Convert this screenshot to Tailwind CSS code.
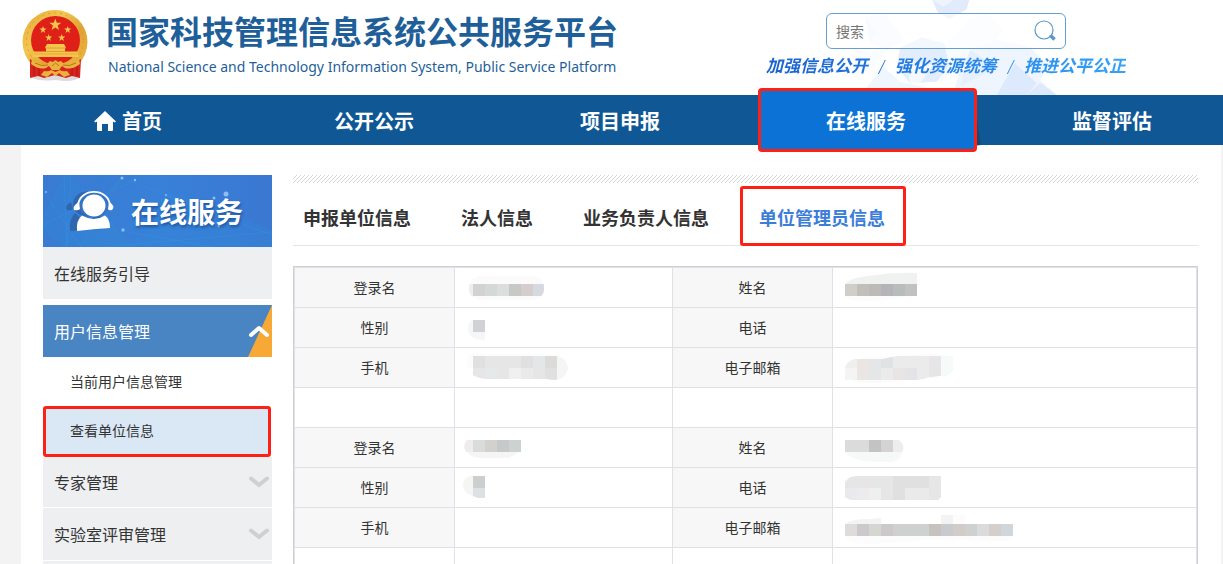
<!DOCTYPE html>
<html lang="zh-CN">
<head>
<meta charset="utf-8">
<title>国家科技管理信息系统公共服务平台</title>
<script src="https://cdn.jsdelivr.net/npm/@tailwindcss/browser@4"></script>
</head>
<body class="h-screen overflow-hidden bg-[#f3f3f3] font-['Noto_Sans_CJK_SC',sans-serif] text-[#333]">
<header class="relative flex h-[95px] bg-white pl-[22px] pr-[97px]">
  <!-- faint polygon backdrop -->
  <svg class="absolute right-0 top-0 h-[95px] w-[483px]" viewBox="0 0 1449 285" aria-hidden="true">
    <path d="M577 0H688L680 28L628 58L592 35Z" fill="#e1ebfc"/><path d="M577 0H640L610 20Z" fill="#eef4fd"/>
    <path d="M375 50L435 42L495 120L440 150L390 130Z" fill="#f3f8fe"/><path d="M375 50L410 95L390 130Z" fill="#ecf3fe"/>
    <path d="M685 60L740 40L790 90L750 150L680 170L600 250L560 170L620 130Z" fill="#f7faff"/>
    <path d="M480 145L545 112L612 130L628 195L590 245L510 250L470 200Z" fill="#e2edfd"/><path d="M500 180L580 195L540 250L510 250Z" fill="#f5f9ff"/>
    <path d="M380 262L430 200L480 245L560 262L500 285H370Z" fill="#f0f6fe"/>
    <path d="M690 150L770 120L870 140L925 200L900 240L950 285H770L640 285L660 210Z" fill="#eff5fe"/>
    <path d="M770 285L825 190L890 250L860 285Z" fill="#dde9fc"/><path d="M860 285L900 248L950 285Z" fill="#deeafc"/><path d="M690 150L770 200L660 260Z" fill="#e6f0fd"/>
    <path d="M340 130L390 160L440 150L400 200L350 230Z" fill="#fafcff"/>
  </svg>
  <svg class="mt-[9px] h-[73px] w-[67px] shrink-0" viewBox="0 0 67 73" role="img" aria-label="国徽">
    <defs><linearGradient id="gold" x1="0" y1="0" x2="1" y2="1"><stop offset="0" stop-color="#e3a936"/><stop offset=".35" stop-color="#f3c650"/><stop offset=".6" stop-color="#e0a233"/><stop offset="1" stop-color="#efbd46"/></linearGradient></defs>
    <path d="M9 68Q16 73 33 71Q52 74 58 68L57 65H10Z" fill="#dcdcdc"/>
    <ellipse cx="33" cy="33" rx="32.500" ry="32" fill="url(#gold)"/>
    <ellipse cx="33" cy="32" rx="28.500" ry="28" fill="none" stroke="#d89d31" stroke-width="1" stroke-dasharray="2 4"/>
    <path d="M8 50L20 57H47L59 50L58 69L50 67L44 69L33 66L22 69L16 67L8 69Z" fill="#d8241c"/>
    <path d="M12 55V67M17 57V67M50 57V67M55 55V67" stroke="#aa1818"/>
    <ellipse cx="33.500" cy="31" rx="24.500" ry="24" fill="#df2019"/>
    <g fill="#f5c64b">
      <path d="M33.300 9.500l1.500 4.300h4.500l-3.600 2.800 1.300 4.400-3.700-2.600-3.700 2.600 1.300-4.400-3.600-2.800h4.500z"/>
      <path d="M21 17l.9 2.600h2.700l-2.200 1.600.8 2.700-2.200-1.600-2.200 1.600.8-2.700-2.200-1.600h2.700zM45.700 17l.9 2.600h2.700l-2.200 1.600.8 2.700-2.200-1.600-2.200 1.600.8-2.700-2.200-1.600h2.700zM26.700 25l.9 2.600h2.700l-2.200 1.600.8 2.700-2.200-1.600-2.200 1.600.8-2.700-2.200-1.600h2.700zM39.700 25l.9 2.600h2.700l-2.200 1.600.8 2.700-2.200-1.600-2.200 1.600.8-2.700-2.200-1.600h2.700z"/>
      <path d="M25 35h17l2 3.500-1 .5v3.500h12l2 5.500H10l2-5.500h12V39l-1-.5z"/>
    </g>
    <path d="M23 39h21M24 42.500h19" stroke="#d59a30" stroke-width=".8"/>
    <path d="M12 45h43" stroke="#dda538" stroke-width=".7"/>
    <path d="M17 49h33q-7 6-16.500 6T17 49z" fill="#df2019"/>
    <path d="M10 50Q18 57 25 55l3-3 3 1 2.500-2 2.500 2 3-1 3 3Q49 57 57 50L58 55Q50 61 43 59l-3-2-3 4h-7l-3-4-3 2Q17 61 9 55Z" fill="#eab33d"/>
    <path d="M13 54Q20 58 26 56M54 54Q47 58 41 56M30 57l3.500-3 3.500 3" fill="none" stroke="#b9741c"/>
    <path d="M22 62q5 1 7-1l4.500 2 4.500-2q2 2 7 1l3 4-6 2-5-4-3.500 3-3.500-3-5 4-6-2z" fill="#eab33d"/>
  </svg>
  <div class="ml-[17px] whitespace-nowrap text-[#1f5f99]">
    <h1 class="mt-[6px] text-[32px] font-bold leading-[48px]">国家科技管理信息系统公共服务平台</h1>
    <p class="pl-[2px] font-['Noto_Sans',sans-serif] text-[14px] leading-[26px]">National Science and Technology Information System, Public Service Platform</p>
  </div>
  <div class="relative ml-auto w-[360px] shrink-0">
    <form class="ml-[60px] mt-[13px] flex h-9 w-60 items-center rounded-md border border-[#659fd0] bg-white/60 pl-[9px] pr-2" onsubmit="return false">
      <input type="search" aria-label="搜索" placeholder="搜索" class="min-w-0 flex-1 bg-transparent text-sm outline-none placeholder:text-[#757575]">
      <button type="submit" aria-label="提交搜索"><svg class="size-6" viewBox="0 0 24 24" fill="none" stroke="#5b97cb"><circle cx="11" cy="11" r="9" stroke-width="1.200"/><path d="M16.500 16.500L18 18" stroke-width="1.500"/><path d="M18 17L21.500 20.500" stroke-width="3.500"/></svg></button>
    </form>
    <p class="mt-1 flex items-center justify-between whitespace-nowrap bg-linear-to-r from-[#1b62cf] to-[#35a2f8] bg-clip-text font-['Liberation_Serif','Noto_Sans_CJK_SC',serif] text-[17px] font-bold italic leading-6 text-transparent"><span>加强信息公开</span><span class="text-xl font-normal">/</span><span>强化资源统筹</span><span class="text-xl font-normal">/</span><span>推进公平公正</span></p>
  </div>
</header>

<nav class="relative flex h-[50px] bg-[#0f5895] pl-[5px] text-xl font-bold text-white" aria-label="主导航">
  <div class="-mr-3 flex flex-1 pt-px">
    <a href="#" class="flex flex-1 items-center justify-center gap-[6px]"><svg class="h-5 w-[22px]" viewBox="0 0 22 20" fill="#fff" aria-hidden="true"><path d="M11 0L22 10.500L20.500 11.500L19 10.500V19Q19 20 18 20H14V13H8V20H4Q3 20 3 19V10.500L1.500 11.500L0 10.500Z"/></svg>首页</a>
    <a href="#" class="flex flex-1 items-center justify-center">公开公示</a>
    <a href="#" class="flex flex-1 items-center justify-center">项目申报</a>
    <a href="#" aria-current="page" class="relative flex flex-1 items-center justify-center">
      <svg class="absolute -bottom-px right-2 h-[50px] w-2" viewBox="0 0 8 50" aria-hidden="true"><path d="M0 0L8 49L0 50Z" fill="#144a78"/></svg>
      <span class="absolute -bottom-[7px] -top-2 left-[15px] right-3 rounded-[4px] border-3 border-[#ff2015] bg-[#0c72d6]"></span>
      <span class="relative">在线服务</span></a>
    <a href="#" class="flex flex-1 items-center justify-center">监督评估</a>
  </div>
</nav>

<main class="ml-[21px] mr-[2px] flex h-[calc(100vh-145px)] gap-[21px] overflow-hidden bg-white pl-[22px] pr-[23px] pt-[30px]">
  <aside class="w-[229px] shrink-0 text-base">
    <div class="relative h-[72px] bg-linear-to-r from-[#397bd2] via-[#3880d8] to-[#3b78d2]">
      <svg class="absolute inset-0 size-full" viewBox="0 0 229 72" aria-hidden="true">
        <path d="M0 40L21 0L28 0L90 72H20L0 55ZM100 60L125 15L229 55V72H60Z" fill="#2f8bdc" opacity=".3"/>
        <path d="M0 15L38 72L80 0M20 72L78 3L229 60M60 72L229 57M21 0L24 72M28 0L24 72M125 20L80 56L170 72M0 50L92 5" fill="none" stroke="#38a0e4" stroke-width=".5" opacity=".5"/>
        <g fill="#8bbdf0"><circle cx="79" cy="3" r="1.500"/><circle cx="92" cy="5" r="1.200"/><circle cx="123" cy="20" r="1"/><circle cx="171" cy="23" r="1.500"/><circle cx="183" cy="19" r="2.500"/><circle cx="80" cy="55" r="1.700"/><circle cx="176" cy="51" r="1.500"/><circle cx="3" cy="17" r="1"/></g>
        <g fill="#2f66ae" transform="translate(-7 0)"><ellipse cx="51" cy="29" rx="14" ry="12.500"/><path d="M35 27Q28 31 31 35Q35 36 37 34ZM39 38Q51 50 63 39Q68 44 67 54L34 56Q33 44 39 38Z"/></g>
        <ellipse cx="51" cy="29.500" rx="15" ry="13" fill="#3474c4"/>
        <ellipse cx="51" cy="30.500" rx="11.500" ry="11" fill="#fff"/>
        <path d="M35 30C37 12.500 65 12.500 67 30" fill="none" stroke="#fff" stroke-width="1.800"/>
        <path d="M36 27Q29 31 31 35Q35 36 37 34ZM66 27Q73 31 69 35Q66 36 65 34ZM39 40.500Q51 47.500 62 40.500Q67 44 67 53Q51 54 34 56Q33 45 39 40.500Z" fill="#fff"/>
      </svg>
      <h2 class="relative pl-[88px] text-[28px] font-bold leading-[72px] text-white text-shadow-[1px_2px_3px_#1d559f]">在线服务</h2>
    </div>
    <a href="#" class="flex h-[52px] items-center bg-[#eeeff1] pl-[11px]">在线服务引导</a>
    <a href="#" class="relative mt-[6px] flex h-[52px] items-center bg-[#4885c2] pl-[11px] text-white">用户信息管理
      <svg class="absolute right-0 top-0 h-[52px] w-6" viewBox="0 0 24 52" fill="none" aria-hidden="true"><path d="M24 0V52H0Z" fill="#f8a835"/><path d="M3 30L11 23L19 30" stroke="#fff" stroke-width="4" stroke-linecap="round" stroke-linejoin="round"/></svg></a>
    <a href="#" class="flex h-[49px] items-center pb-[2px] pl-[27px] text-sm">当前用户信息管理</a>
    <a href="#" aria-current="page" class="mr-px flex h-[51px] items-center rounded-[3px] border-3 border-[#ff2015] bg-[#dae7f4] pb-[3px] pl-6 text-sm">查看单位信息</a>
    <a href="#" class="mb-px flex h-[50px] items-center justify-between bg-[#eeeff1] pl-[11px] pr-[3px]">专家管理
      <svg class="h-3 w-5" viewBox="0 0 20 12" fill="none" aria-hidden="true"><path d="M2 2.500L10 9L18 2.500" stroke="#d0d0d0" stroke-width="4" stroke-linecap="round"/></svg></a>
    <a href="#" class="mb-px flex h-[52px] items-center justify-between bg-[#eeeff1] pl-[11px] pr-[3px]">实验室评审管理
      <svg class="h-3 w-5" viewBox="0 0 20 12" fill="none" aria-hidden="true"><path d="M2 2.500L10 9L18 2.500" stroke="#d0d0d0" stroke-width="4" stroke-linecap="round"/></svg></a>
    <div class="h-[52px] bg-[#eeeff1]"></div>
  </aside>

  <section class="min-w-0 flex-1">
    <svg class="block h-2 w-full" aria-hidden="true"><defs><pattern id="hatch" width="4" height="4" patternUnits="userSpaceOnUse"><path d="M-1 5L5 -1M-1 1L1 -1M3 5L5 3" stroke="#d8d8d8"/></pattern></defs><rect width="100%" height="8" fill="url(#hatch)"/></svg>
    <div class="flex h-[63px] items-center gap-[50px] whitespace-nowrap border-b border-[#e5e5e8] pb-px pl-[10px] pt-[6px] text-lg font-bold">
      <a href="#">申报单位信息</a>
      <a href="#">法人信息</a>
      <a href="#">业务负责人信息</a>
      <a href="#" aria-current="page" class="relative text-[#3b7dd8]">单位管理员信息<span class="absolute -bottom-[15px] -left-[19px] -right-[21px] -top-[17px] rounded-[3px] border-3 border-[#ff2015]"></span></a>
    </div>
    <div class="mt-5 border border-[#cfcfd6]">
    <table class="w-full table-fixed border-collapse text-sm [&_td]:border [&_td]:border-[#e0e0e6] [&_td]:p-0 [&_th]:border [&_th]:border-[#e0e0e6] [&_th]:bg-[#f7f7f7] [&_th]:p-0 [&_th]:pb-[2px] [&_th]:font-normal [&_tr]:h-10 [&_svg]:block [&_svg]:h-[38px] [&_svg]:w-[200px]">
      <colgroup><col class="w-[160px]"><col class="w-[218px]"><col class="w-[160px]"><col></colgroup>
      <tbody>
      <tr><th scope="row">登录名</th><td><svg viewBox="0 1 200 38" shape-rendering="crispEdges"><clipPath id="a1"><rect x="14" y="8" width="75" height="24" rx="11"/></clipPath><g clip-path="url(#a1)"><path d="M14 8h75v24H14z" fill="#fbfbfb"/><path d="M14 16h4v12h-4z" fill="#eee"/><path d="M18 16h12v12H18z" fill="#d2d2d2"/><path d="M30 16h12v12H30z" fill="#d4d8d9"/><path d="M42 16h12v12H42z" fill="#dcdddd"/><path d="M54 16h12v12H54z" fill="#c8c8c6"/><path d="M66 16h12v12H66z" fill="#d6cece"/><path d="M78 16h12v12H78z" fill="#d6dae0"/></g></svg></td>
        <th scope="row">姓名</th><td><svg viewBox="0 1 200 38"><path d="M12 16Q18 9 36 8Q60 4 84 5V16Z" fill="#f0f1f1"/><path d="M12 28Q16 34 40 33L84 28Z" fill="#fcfcfc"/><g shape-rendering="crispEdges"><path d="M12 16h12v12H12z" fill="#cfcec8"/><path d="M24 16h12v12H24z" fill="#c0bfbc"/><path d="M36 16h12v12H36z" fill="#bcbbb8"/><path d="M48 16h12v12H48z" fill="#b6b3b9"/><path d="M60 16h12v12H60z" fill="#b8bdbc"/><path d="M72 16h12v12H72z" fill="#c1c1c1"/></g></svg></td></tr>
      <tr><th scope="row">性别</th><td><svg viewBox="0 1 200 38"><path d="M18 12Q13 13 13 21Q14 32 30 32V12Z" fill="#f6f6f6"/><path d="M18 12h12v12H18z" fill="#d1d2d5"/></svg></td>
        <th scope="row">电话</th><td></td></tr>
      <tr><th scope="row">手机</th><td><svg viewBox="0 1 200 38"><path d="M12 8Q20 3 30 6H100V8H18V20H12Z" fill="#fcfcfc"/><path d="M102 8Q112 10 113 20Q111 30 102 32Z" fill="#f3f5f6"/><path d="M18 8h84v24h-7l-3-1H34Q24 31 18 27Z" fill="#e6e6e7"/><g shape-rendering="crispEdges"><path d="M18 8h12v12H18z" fill="#e1e0e1"/><path d="M66 8h12v12H66z" fill="#e1dfe1"/><path d="M78 8h12v12H78z" fill="#e4e7e8"/><path d="M90 8h12v12H90z" fill="#dddbd9"/><path d="M90 20h12v11H90z" fill="#e0e0e0"/><path d="M30 20h12v10H30z" fill="#e5e9ea"/><path d="M54 20h12v11H54z" fill="#f0f0f3"/><path d="M66 20h12v11H66z" fill="#ebe9e9"/></g></svg></td>
        <th scope="row">电子邮箱</th><td><svg viewBox="0 1 200 38"><path d="M14 28Q20 37 44 35L100 30L120 18Q118 2 84 7L30 10Z" fill="#fbfbfb"/><clipPath id="b3"><path d="M12 32V20Q14 13 22 11H50L64 8H120V20Q119 28 106 28L96 29Q90 32 84 32H20Z"/></clipPath><g clip-path="url(#b3)" shape-rendering="crispEdges"><path d="M12 8h108v24H12z" fill="#ebebec"/><path d="M12 8h12v12H12z" fill="#efeff0"/><path d="M12 20h12v12H12z" fill="#f4f4f5"/><path d="M24 8h12v24H24z" fill="#ebe5e3"/><path d="M36 8h12v24H36z" fill="#e4e6e8"/><path d="M48 8h12v12H48z" fill="#e0e2e4"/><path d="M60 20h12v12H60z" fill="#e8e5e4"/><path d="M72 20h12v12H72z" fill="#e2e4e7"/><path d="M96 8h12v24H96z" fill="#e6e6e8"/><path d="M108 8h12v24h-12z" fill="#f6faf9"/></g></svg></td></tr>
      <tr><td></td><td></td><td></td><td></td></tr>
      <tr><th scope="row">登录名</th><td><svg viewBox="0 1 200 38"><path d="M12 24Q16 30 28 30H54L64 24Z" fill="#f5f5f5"/><path d="M18 12h-6Q7 18 11 24H18Z" fill="#efecee"/><g shape-rendering="crispEdges"><path d="M18 12h12v12H18z" fill="#d9dcdb"/><path d="M30 12h12v12H30z" fill="#d3d1cd"/><path d="M42 12h12v12H42z" fill="#c6c8c9"/><path d="M54 12h12v12H54z" fill="#ccd1d2"/></g></svg></td>
        <th scope="row">姓名</th><td><svg viewBox="0 1 200 38"><path d="M12 24Q20 34 44 34H60Q68 31 70 22Z" fill="#f7f8f8"/><path d="M60 12h6q7 6 3 12h-9z" fill="#ebedee"/><g shape-rendering="crispEdges"><path d="M12 12h24v12H12z" fill="#dbdbdb"/><path d="M36 12h12v12H36z" fill="#c3c3c6"/><path d="M48 12h12v12H48z" fill="#d5d2d3"/></g></svg></td></tr>
      <tr><th scope="row">性别</th><td><svg viewBox="0 1 200 38"><path d="M18 8Q8 8 8 17Q8 25 18 28Z" fill="#f5f5f3"/><path d="M18 8h12v12H18z" fill="#cdcfcf"/><path d="M18 20h12v10h-7l-5-2Z" fill="#dfe0e3"/></svg></td>
        <th scope="row">电话</th><td><svg viewBox="0 1 200 38"><clipPath id="b6"><path d="M12 14Q16 8 24 8H108V29L105 32H18L12 29Z"/></clipPath><g clip-path="url(#b6)" shape-rendering="crispEdges"><path d="M12 8h96v24H12z" fill="#e6e6e6"/><path d="M12 20h12v12H12z" fill="#eaeaec"/><path d="M24 20h12v12H24z" fill="#eeebee"/><path d="M36 20h12v12H36z" fill="#eef0ef"/><path d="M60 8h36v12H60zM60 20h12v12H60z" fill="#e0e0e0"/><path d="M72 20h24v12H72z" fill="#eaeaea"/></g></svg></td></tr>
      <tr><th scope="row">手机</th><td></td>
        <th scope="row">电子邮箱</th><td><svg viewBox="0 1 200 38"><path d="M12 16Q18 11 36 11L48 10V16ZM108 7h12v9h-12z" fill="#f3f3f4"/><path d="M120 7h12v9h-12zM12 28Q16 37 40 36L90 32L175 33L180 28Z" fill="#fcfcfc"/><g shape-rendering="crispEdges"><path d="M12 16h168v12H12z" fill="#cfd0d0"/><path d="M12 16h12v12H12z" fill="#dddcda"/><path d="M24 16h12v12H24z" fill="#cbc9cc"/><path d="M36 16h12v12H36z" fill="#d3d6d1"/><path d="M48 16h12v12H48z" fill="#cdc9cb"/><path d="M96 16h12v12H96z" fill="#c8c2be"/><path d="M108 16h12v12h-12z" fill="#c8cace"/><path d="M120 16h12v12h-12z" fill="#d2ccc8"/><path d="M144 16h12v12h-12z" fill="#d9dbdc"/><path d="M156 16h12v12h-12z" fill="#d5cfcc"/><path d="M168 16h12v12h-12z" fill="#d1d6da"/></g></svg></td></tr>
      <tr><td></td><td></td><td></td><td></td></tr>
      </tbody>
    </table>
    </div>
  </section>
</main>
</body>
</html>
